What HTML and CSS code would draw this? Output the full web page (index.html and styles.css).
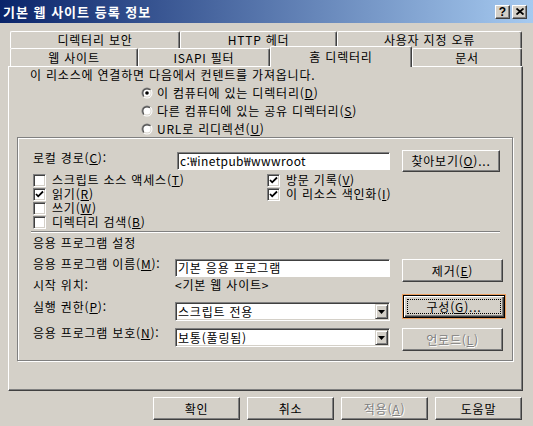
FILE: index.html
```html
<!DOCTYPE html>
<html lang="ko">
<head>
    <meta charset="UTF-8">
    <title>기본 웹 사이트 등록 정보</title>
    <link rel="stylesheet" href="styles.css">
</head>
<body>
    <svg class="defs" width="0" height="0">
        <defs>
            <linearGradient id="ringOuter" x1="0" y1="0" x2="1" y2="1">
                <stop offset="0.5" stop-color="#808080"/>
                <stop offset="0.5" stop-color="#ffffff"/>
            </linearGradient>
            <linearGradient id="ringInner" x1="0" y1="0" x2="1" y2="1">
                <stop offset="0.5" stop-color="#404040"/>
                <stop offset="0.5" stop-color="#d4d0c8"/>
            </linearGradient>
        </defs>
    </svg>

    <div class="titlebar">
        <span class="title">기본 웹 사이트 등록 정보</span>
        <div class="caption-btns">
            <span class="cbtn help">?</span>
            <span class="cbtn">
                <svg width="8" height="7" viewBox="0 0 8 7"><path d="M0.5 0.5 L7.5 6.5 M7.5 0.5 L0.5 6.5" stroke="#000" stroke-width="1.8"/></svg>
            </span>
        </div>
    </div>

    <div class="tabs">
        <div class="tab-row">
            <div class="tab t-security">디렉터리 보안</div>
            <div class="tab t-http">HTTP 헤더</div>
            <div class="tab t-errors">사용자 지정 오류</div>
        </div>
        <div class="tab-row front">
            <div class="tab t-site">웹 사이트</div>
            <div class="tab t-isapi">ISAPI 필터</div>
            <div class="tab t-home active">홈 디렉터리</div>
            <div class="tab t-docs">문서</div>
        </div>
    </div>

    <div class="panel">
        <p class="intro">이 리소스에 연결하면 다음에서 컨텐트를 가져옵니다.</p>

        <div class="radios">
            <div class="radio">
                <svg width="12" height="12" viewBox="0 0 12 12"><circle cx="6" cy="6" r="5.5" fill="url(#ringOuter)"/><circle cx="6" cy="6" r="4.5" fill="url(#ringInner)"/><circle cx="6" cy="6" r="3.6" fill="#fff"/><circle cx="6" cy="6" r="1.8" fill="#000"/></svg>
                <span>이 컴퓨터에 있는 디렉터리(<u>D</u>)</span>
            </div>
            <div class="radio">
                <svg width="12" height="12" viewBox="0 0 12 12"><circle cx="6" cy="6" r="5.5" fill="url(#ringOuter)"/><circle cx="6" cy="6" r="4.5" fill="url(#ringInner)"/><circle cx="6" cy="6" r="3.6" fill="#fff"/></svg>
                <span>다른 컴퓨터에 있는 공유 디렉터리(<u>S</u>)</span>
            </div>
            <div class="radio">
                <svg width="12" height="12" viewBox="0 0 12 12"><circle cx="6" cy="6" r="5.5" fill="url(#ringOuter)"/><circle cx="6" cy="6" r="4.5" fill="url(#ringInner)"/><circle cx="6" cy="6" r="3.6" fill="#fff"/></svg>
                <span>URL로 리디렉션(<u>U</u>)</span>
            </div>
        </div>

        <div class="frame">
            <div class="path-row">
                <span class="lbl">로컬 경로(<u>C</u>):</span>
                <span class="field path">c:₩inetpub₩wwwroot</span>
                <span class="btn browse"><span>찾아보기(<u>O</u>)...</span></span>
            </div>

            <div class="checks">
                <div class="check-col left">
                    <div class="check"><span class="box"></span><span>스크립트 소스 액세스(<u>T</u>)</span></div>
                    <div class="check"><span class="box"><svg width="9" height="9" viewBox="0 0 9 9"><path d="M1 4 L3.2 6.3 L8 1.5" fill="none" stroke="#000" stroke-width="1.8"/></svg></span><span>읽기(<u>R</u>)</span></div>
                    <div class="check"><span class="box"></span><span>쓰기(<u>W</u>)</span></div>
                    <div class="check"><span class="box"></span><span>디렉터리 검색(<u>B</u>)</span></div>
                </div>
                <div class="check-col">
                    <div class="check"><span class="box"><svg width="9" height="9" viewBox="0 0 9 9"><path d="M1 4 L3.2 6.3 L8 1.5" fill="none" stroke="#000" stroke-width="1.8"/></svg></span><span>방문 기록(<u>V</u>)</span></div>
                    <div class="check"><span class="box"><svg width="9" height="9" viewBox="0 0 9 9"><path d="M1 4 L3.2 6.3 L8 1.5" fill="none" stroke="#000" stroke-width="1.8"/></svg></span><span>이 리소스 색인화(<u>I</u>)</span></div>
                </div>
            </div>

            <div class="sep"></div>
            <p class="section-title">응용 프로그램 설정</p>

            <div class="app">
                <div class="app-left">
                    <div class="app-row r-name">
                        <span class="lbl">응용 프로그램 이름(<u>M</u>):</span>
                        <span class="field app-field">기본 응용 프로그램</span>
                    </div>
                    <div class="app-row r-start">
                        <span class="lbl">시작 위치:</span>
                        <span class="value">&lt;기본 웹 사이트&gt;</span>
                    </div>
                    <div class="app-row r-exec">
                        <span class="lbl">실행 권한(<u>P</u>):</span>
                        <div class="combo">
                            <span class="combo-text">스크립트 전용</span>
                            <span class="combo-btn"><svg width="7" height="4" viewBox="0 0 7 4"><path d="M0 0 H7 L3.5 4 Z" fill="#000"/></svg></span>
                        </div>
                    </div>
                    <div class="app-row r-protect">
                        <span class="lbl">응용 프로그램 보호(<u>N</u>):</span>
                        <div class="combo">
                            <span class="combo-text">보통(풀링됨)</span>
                            <span class="combo-btn"><svg width="7" height="4" viewBox="0 0 7 4"><path d="M0 0 H7 L3.5 4 Z" fill="#000"/></svg></span>
                        </div>
                    </div>
                </div>
                <div class="app-right">
                    <span class="btn b-remove"><span>제거(<u>E</u>)</span></span>
                    <span class="btn default b-config"><span class="focus"><span>구성(<u>G</u>)...</span></span></span>
                    <span class="btn disabled b-unload"><span>언로드(<u>L</u>)</span></span>
                </div>
            </div>
        </div>
    </div>

    <div class="footer">
        <span class="btn">확인</span>
        <span class="btn">취소</span>
        <span class="btn disabled"><span>적용(<u>A</u>)</span></span>
        <span class="btn">도움말</span>
    </div>
</body>
</html>
```

FILE: styles.css
```css
* {
    margin: 0;
    padding: 0;
    box-sizing: border-box;
}

body {
    width: 533px;
    height: 426px;
    overflow: hidden;
    background: #d4d0c8;
    color: #000;
    font-family: "Noto Sans CJK KR", "Noto Sans", sans-serif;
    font-size: 12px;
    line-height: 14px;
    letter-spacing: 0.8px;
}

.defs {
    position: absolute;
}

u {
    text-decoration: underline;
    text-underline-offset: 1px;
}

/* title bar */
.titlebar {
    height: 23px;
    display: flex;
    align-items: center;
    justify-content: space-between;
    padding: 0 6px 0 3px;
    background: linear-gradient(to right, #0a246a, #a6caf0);
    color: #fff;
    font-size: 13px;
    font-weight: bold;
    letter-spacing: 1px;
}

.caption-btns {
    display: flex;
    gap: 2px;
}

.cbtn {
    width: 15px;
    height: 14px;
    display: flex;
    align-items: center;
    justify-content: center;
    background: #d4d0c8;
    color: #000;
    border: 1px solid;
    border-color: #fff #404040 #404040 #fff;
    box-shadow: inset -1px -1px #808080;
    font-family: "Liberation Sans", sans-serif;
    font-size: 12px;
    line-height: 12px;
    letter-spacing: 0;
}

/* tabs */
.tabs {
    padding: 8px 11px 0 10px;
}

.tab-row {
    display: flex;
    height: 17px;
}

.tab-row.front {
    height: 18px;
}

.tab {
    height: 100%;
    display: flex;
    align-items: center;
    justify-content: center;
    background: #d4d0c8;
    border-top: 1px solid #fff;
    border-left: 1px solid #fff;
    border-right: 1px solid #404040;
    box-shadow: inset -1px 0 #808080;
    border-top-left-radius: 2px;
    border-top-right-radius: 2px;
    white-space: nowrap;
}

.t-security { width: 170px; }
.t-http { width: 157px; }
.t-errors { width: 185px; }
.t-site { width: 128px; }
.t-isapi { width: 132px; }
.t-home { width: 142px; }
.t-docs { width: 110px; }

.tab.active {
    position: relative;
    z-index: 1;
    height: 21px;
    margin-top: -2px;
    padding-bottom: 1px;
}

/* page panel */
.panel {
    width: 515px;
    height: 325px;
    margin-left: 8px;
    border: 1px solid;
    border-color: #fff #404040 #404040 #fff;
    box-shadow: inset -1px -1px #808080;
}

.intro {
    margin: 1px 0 0 21px;
}

.radios {
    margin: 3px 0 0 132px;
    display: flex;
    flex-direction: column;
    gap: 2px;
}

.radio {
    height: 16px;
    display: flex;
    align-items: center;
    gap: 4px;
}

.frame {
    width: 496px;
    height: 224px;
    margin-left: 8px;
    padding: 12px 9px 0 15px;
    border: 1px solid #808080;
    box-shadow: 1px 1px #fff, inset 1px 1px #fff;
}

.path-row {
    display: flex;
    height: 23px;
}

.path-row .lbl {
    width: 144px;
    margin-top: 1px;
}

.field {
    height: 18px;
    display: flex;
    align-items: center;
    padding-left: 2px;
    background: #fff;
    border: 1px solid;
    border-color: #808080 #fff #fff #808080;
    box-shadow: inset 1px 1px #404040;
    white-space: nowrap;
}

.field.path {
    width: 213px;
    margin-top: 2px;
    letter-spacing: 0.4px;
}

.btn {
    height: 23px;
    display: flex;
    align-items: center;
    justify-content: center;
    background: #d4d0c8;
    border: 1px solid;
    border-color: #fff #404040 #404040 #fff;
    box-shadow: inset -1px -1px #808080;
    white-space: nowrap;
}

.btn.browse {
    width: 98px;
    height: 22px;
    margin-left: 12px;
}

.btn.disabled {
    color: #808080;
    text-shadow: 1px 1px #fff;
}

.btn.default {
    border-color: #000;
    box-shadow: inset 1px 1px #fff, inset -1px -1px #404040, inset -2px -2px #808080, 0 0 0 1px #eea060;
    padding: 3px;
}

.focus {
    flex: 1;
    align-self: stretch;
    display: flex;
    align-items: center;
    justify-content: center;
    border: 1px dotted #000;
}

.checks {
    display: flex;
}

.check-col.left {
    width: 234px;
}

.check {
    height: 14px;
    display: flex;
    align-items: center;
    gap: 6px;
    white-space: nowrap;
    line-height: 12px;
}

.box {
    width: 13px;
    height: 13px;
    display: flex;
    align-items: center;
    justify-content: center;
    background: #fff;
    border: 1px solid;
    border-color: #808080 #fff #fff #808080;
    box-shadow: inset 1px 1px #404040, inset -1px -1px #d4d0c8;
}

.sep {
    height: 2px;
    margin: 2px 3px 0 -2px;
    border-top: 1px solid #808080;
    border-bottom: 1px solid #fff;
}

.section-title {
    margin-top: 3px;
}

.app {
    display: flex;
    margin-top: 7px;
}

.app-left {
    width: 357px;
}

.app-row {
    display: flex;
    align-items: flex-start;
}

.app-row .lbl {
    width: 142px;
    white-space: nowrap;
}

.r-name { height: 21px; }
.r-start { height: 14px; }
.r-exec { height: 30px; }

.app-field {
    width: 215px;
    margin-top: 2px;
}

.r-exec .lbl { margin-top: 8px; }
.r-exec .combo { margin-top: 10px; }
.r-protect .lbl { margin-top: 4px; }
.r-protect .combo { margin-top: 6px; }

.combo {
    width: 215px;
    height: 19px;
    display: flex;
    align-items: center;
    padding: 1px 1px 1px 2px;
    background: #fff;
    border: 1px solid;
    border-color: #808080 #fff #fff #808080;
    box-shadow: inset 1px 1px #404040, inset -1px -1px #d4d0c8;
}

.combo-text {
    flex: 1;
}

.combo-btn {
    width: 13px;
    height: 15px;
    display: flex;
    align-items: center;
    justify-content: center;
    background: #d4d0c8;
    border: 1px solid;
    border-color: #d4d0c8 #404040 #404040 #d4d0c8;
    box-shadow: inset 1px 1px #fff, inset -1px -1px #808080;
}

.app-right {
    width: 101px;
    margin-left: 12px;
    display: flex;
    flex-direction: column;
}

.b-remove { margin-top: 2px; }
.b-config { margin-top: 13px; margin-left: 1px; width: 102px; }
.b-unload { margin-top: 10px; }

/* dialog buttons */
.footer {
    display: flex;
    justify-content: flex-end;
    gap: 7px;
    padding-right: 11px;
    margin-top: 6px;
}

.footer .btn {
    width: 87px;
}
```
